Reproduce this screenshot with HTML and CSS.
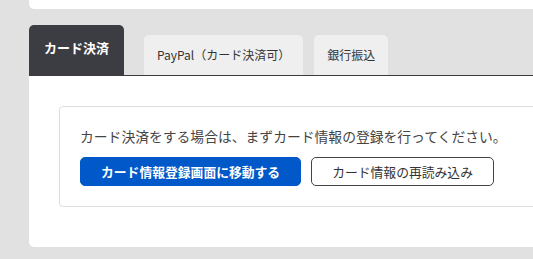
FILE: index.html
```html
<!DOCTYPE html>
<html lang="ja">
<head>
<meta charset="UTF-8">
<meta name="viewport" content="width=device-width, initial-scale=1.0">
<title>お支払い方法</title>
<link rel="stylesheet" href="styles.css">
</head>
<body>
    <div class="page">
        <!-- previous section (cut off) -->
        <div class="card card-top"></div>

        <!-- Payment tabs -->
        <div class="tabs">
            <span class="tab active">カード決済</span>
            <span class="tab">PayPal（カード決済可）</span>
            <span class="tab">銀行振込</span>
        </div>

        <div class="card panel">
            <div class="notice">
                <p>カード決済をする場合は、まずカード情報の登録を行ってください。</p>
                <div class="buttons">
                    <button class="btn btn-primary">カード情報登録画面に移動する</button>
                    <button class="btn btn-outline">カード情報の再読み込み</button>
                </div>
            </div>
        </div>
    </div>
</body>
</html>
```

FILE: styles.css
```css
body, html {
    margin: 0;
    padding: 0;
    background: #e1e1e1;
    font-family: "Noto Sans CJK JP", "Noto Sans", sans-serif;
    color: #333;
    overflow: hidden;
}

.page {
    width: 640px;
    padding-left: 29px;
}

.card {
    background: #fff;
    border-radius: 0 0 5px 5px;
}

.card-top {
    height: 9px;
    border-radius: 0 0 5px 5px;
}

.tabs {
    margin-top: 16px;
    display: flex;
    align-items: flex-end;
    gap: 11px;
    border-bottom: 1px solid #3a3a40;
}

.tab {
    height: 40px;
    line-height: 40px;
    padding: 0 13px;
    font-size: 12px;
    background: #efefef;
    color: #333;
    border-radius: 5px 5px 0 0;
    cursor: pointer;
}

.tab.active {
    height: 50px;
    line-height: 46px;
    padding: 0 15px;
    margin-right: 9px;
    font-size: 13px;
    font-weight: bold;
    background: #3c3c43;
    color: #fff;
}

.panel {
    padding: 30px 30px 40px;
}

.notice {
    border: 1px solid #dedede;
    border-radius: 4px;
    padding: 19px 20px 20px;
}

.notice p {
    margin: 0 0 11px;
    font-size: 13.8px;
    line-height: 20px;
    color: #444;
}

.buttons {
    display: flex;
    gap: 10px;
}

.btn {
    height: 29px;
    padding: 0 20px;
    font-family: inherit;
    font-size: 12.8px;
    border-radius: 5px;
    cursor: pointer;
}

.btn-primary {
    border: 1px solid #0058c9;
    background: #0058c9;
    color: #fff;
    font-weight: bold;
}

.btn-outline {
    border: 1px solid #444;
    background: #fff;
    color: #333;
}
```
